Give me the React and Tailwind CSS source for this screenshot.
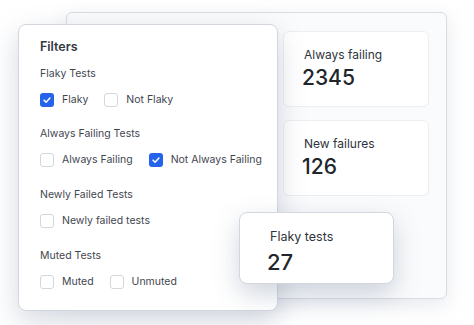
import React from 'react';

const Check = ({ checked }) => (
    <span
        className={
            checked
                ? "w-[14px] h-[14px] rounded-[3px] bg-[#2563eb] flex items-center justify-center shrink-0"
                : "w-[14px] h-[14px] rounded-[3px] border border-[#d4d7dc] bg-white shrink-0"
        }
    >
        {checked && (
            <svg width="10" height="10" viewBox="0 0 12 12" fill="none">
                <path d="M2.5 6.2l2.4 2.4 4.6-4.9" stroke="white" strokeWidth="1.8" strokeLinecap="round" strokeLinejoin="round" />
            </svg>
        )}
    </span>
);

const Option = ({ label, checked }) => (
    <label className="flex items-center gap-2 h-4 whitespace-nowrap">
        <Check checked={checked} />
        <span className="text-[10.5px] text-[#3f4650]">{label}</span>
    </label>
);

const Group = ({ title, options, className }) => (
    <div className={className}>
        <div className="text-[10.5px] leading-4 text-[#3f4650] whitespace-nowrap">{title}</div>
        <div className="flex items-center gap-4 mt-[10px]">
            {options.map((o) => (
                <Option key={o.label} {...o} />
            ))}
        </div>
    </div>
);

const StatCard = ({ title, value }) => (
    <div className="w-[146px] h-[76px] bg-white border border-[#eceef1] rounded-md pl-5 pt-[15px]">
        <div className="text-[12px] leading-4 text-[#2f343b]">{title}</div>
        <div className="text-[21px] leading-6 font-medium text-[#22262b] mt-[3px] -ml-[2px]">{value}</div>
    </div>
);

export default function App() {
    return (
        <div className="w-[474px] h-[325px] bg-white relative overflow-hidden" style={{ fontFamily: 'Inter, "Noto Sans", sans-serif' }}>
            {/* back dashboard */}
            <div className="absolute left-[66px] top-[12px] w-[381px] h-[287px] bg-[#fafbfc] border border-[#d9dde3] rounded-md shadow-[0_6px_20px_rgba(120,135,160,0.18)] flex flex-col items-end pt-[18px] pr-[17px] gap-[13px]">
                <StatCard title="Always failing" value="2345" />
                <StatCard title="New failures" value="126" />
            </div>

            {/* filters */}
            <div className="absolute left-[18px] top-[24px] w-[260px] h-[287px] bg-white border border-[#d3d7dd] rounded-lg shadow-[0_10px_28px_rgba(100,116,145,0.28)] pl-[21px] pt-[12px]">
                <div className="text-[12.5px] leading-5 font-semibold text-[#33383f]">Filters</div>
                <Group
                    className="mt-[9px]"
                    title="Flaky Tests"
                    options={[{ label: "Flaky", checked: true }, { label: "Not Flaky" }]}
                />
                <Group
                    className="mt-[18px]"
                    title="Always Failing Tests"
                    options={[{ label: "Always Failing" }, { label: "Not Always Failing", checked: true }]}
                />
                <Group
                    className="mt-[19px]"
                    title="Newly Failed Tests"
                    options={[{ label: "Newly failed tests" }]}
                />
                <Group
                    className="mt-[19px]"
                    title="Muted Tests"
                    options={[{ label: "Muted" }, { label: "Unmuted" }]}
                />
            </div>

            {/* floating card */}
            <div className="absolute left-[239px] top-[212px] w-[155px] h-[72px] bg-white border border-[#d3d7dd] rounded-lg shadow-[0_10px_26px_rgba(100,116,145,0.3)] pl-[30px] pt-[16px]">
                <div className="text-[12.5px] leading-4 text-[#2f343b]">Flaky tests</div>
                <div className="text-[22px] leading-6 font-medium text-[#22262b] mt-[5px] -ml-[3px]">27</div>
            </div>
        </div>
    );
}
